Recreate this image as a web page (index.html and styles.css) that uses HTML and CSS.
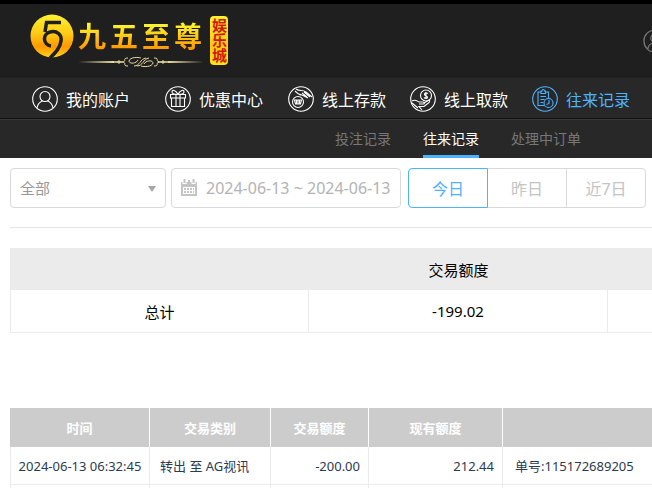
FILE: index.html
```html
<!DOCTYPE html>
<html lang="zh-CN">
<head>
<meta charset="UTF-8">
<meta name="viewport" content="width=device-width, initial-scale=1.0">
<title>往来记录</title>
<link rel="stylesheet" href="styles.css">
</head>
<body>

<header class="header">
  <a class="logo" href="#">
    <svg class="logo-mark" width="44" height="44" viewBox="0 0 44 44">
      <defs>
        <linearGradient id="gold" x1="0" y1="0" x2="0" y2="1">
          <stop offset="0" stop-color="#fff22e"/>
          <stop offset=".45" stop-color="#ffc914"/>
          <stop offset=".75" stop-color="#ff9800"/>
          <stop offset="1" stop-color="#ffd51c"/>
        </linearGradient>
      </defs>
      <circle cx="22" cy="22" r="21.5" fill="url(#gold)"/>
      <path d="M31 8.500H16.500L15 18" fill="none" stroke="#1f1f1f" stroke-width="3.500"/>
      <path d="M21 32C13 31 12 20 20 18C27 16 32 21 31 27C30 34 26 38 20 44" fill="none" stroke="#1f1f1f" stroke-width="3.500"/>
    </svg>
    <span class="logo-text">
      <span class="logo-name"><b>九</b><b>五</b><b>至</b><b>尊</b></span>
      <svg width="126" height="12" viewBox="0 0 126 12" fill="none" stroke="#e9dca0">
        <path d="M0 6L36 5V7ZM126 6L90 5V7Z" fill="#e9dca0" stroke="none"/>
        <path d="M34 6H45M80 6H91" stroke-width="1.5"/>
        <circle cx="41" cy="6" r="1.2"/>
        <circle cx="85" cy="6" r="1.2"/>
        <path d="M50 2C44 2 49 5 45 6C49 7 44 10 50 10M76 2C82 2 77 5 81 6C77 7 82 10 76 10"/>
        <path d="M60 4C58 8 51 8 51 5C52 1 60 1 63 2M66 8C68 4 75 4 75 7C74 11 66 11 63 10M56 10C62 10 62 3 68 2M59 10C65 10 65 3 71 2"/>
      </svg>
    </span>
    <b class="logo-badge">娱乐城</b>
  </a>
  <a class="user-link" href="#" aria-label="会员">
    <svg width="24" height="24" viewBox="0 0 26 26" fill="none" stroke="currentColor" stroke-width="1.4">
      <circle cx="13" cy="13" r="12"/>
      <circle cx="13" cy="10" r="4.5"/>
      <path d="M5 22C6 17 9 15 13 15S20 17 21 22"/>
    </svg>
  </a>
</header>

<nav class="nav">
  <a class="nav-account" href="#">
    <svg class="icon" viewBox="0 0 26 26">
      <circle cx="13" cy="13" r="12.3"/>
      <circle cx="13" cy="10.5" r="5"/>
      <path d="M5 22C5.5 18 8 16 10.5 14.8M21 22C20.5 18 18 16 15.5 14.8"/>
    </svg>
    我的账户
  </a>
  <a class="nav-offers" href="#">
    <svg class="icon" viewBox="0 0 26 26">
      <circle cx="13" cy="13" r="12.3"/>
      <path d="M5.500 8.500H20.500V12H5.500ZM6.500 12V20.500H19.500V12M11 8.500V20.500M15 8.500V20.500"/>
      <path d="M13 8.500C11 4 7 3 7 6C7 8 10 8.500 13 8.500C15 4 19 3 19 6C19 8 16 8.500 13 8.500"/>
    </svg>
    优惠中心
  </a>
  <a href="#">
    <svg class="icon" viewBox="0 0 26 26">
      <circle cx="13" cy="13" r="12.3"/>
      <circle cx="10" cy="16" r="5.5"/>
      <path d="M6.500 14H13.500L12.500 18H7.500ZM8.500 14V18M10 14V18M11.500 14V18"/>
      <path d="M8 3C12 6 14 3 18 6L24 11M7 5C10 8 11 9 14 9L20 12M14 7L19 11M16 6L22 11"/>
    </svg>
    线上存款
  </a>
  <a href="#">
    <svg class="icon" viewBox="0 0 26 26">
      <circle cx="13" cy="13" r="12.3"/>
      <circle cx="16" cy="9.5" r="5.5"/>
      <path d="M18 7.500C16.500 6.500 14 7 14.500 8.500S18 10 17.500 11.500S15 12.500 14 11.500M16 6V13"/>
      <path d="M2 15C5 13 7 15 9 16H13C15 16 15 18 13 18H9M14 17L18 14.500C20 14 20 15.500 19 16.500L14 20.500H9L12 24M2 17L8 22"/>
    </svg>
    线上取款
  </a>
  <a class="active" href="#">
    <svg class="icon" viewBox="0 0 26 26">
      <circle cx="13" cy="13" r="12.3"/>
      <path d="M9 6H6V19.500H12M13 6H16.500V12M9 5H10C10 3 12.500 3 12.500 5H13.500V7.500H9ZM8.500 10.500H14M8.500 13.500H12.500M8.500 16.500H11"/>
      <circle cx="16.5" cy="17" r="4.5"/>
      <path d="M17 14V17.500L14.500 18.500"/>
    </svg>
    往来记录
  </a>
</nav>

<nav class="subnav">
  <a href="#">投注记录</a>
  <a class="active" href="#">往来记录</a>
  <a href="#">处理中订单</a>
</nav>

<main class="content">
  <form class="filters">
    <div class="select-box">
      <select aria-label="交易类别">
        <option>全部</option>
      </select>
    </div>
    <label class="date-box">
      <svg width="18" height="18" viewBox="0 0 18 18" aria-hidden="true">
        <path d="M1 3H17V17H1Z" fill="#c4c4c4"/>
        <path d="M3 8H15V15H3Z" fill="#fff"/>
        <path d="M4.500 0V5M13.500 0V5" stroke="#fff" stroke-width="4"/>
        <path d="M4.500 0V4M9 1V4M13.500 0V4" stroke="#c4c4c4" stroke-width="2"/>
        <path d="M4 10H14M4 13H14" stroke="#c4c4c4" stroke-width="2" stroke-dasharray="2 1"/>
      </svg>
      <input type="text" value="2024-06-13 ~ 2024-06-13" aria-label="日期">
    </label>
    <div class="days">
      <button type="button" class="active">今日</button>
      <button type="button">昨日</button>
      <button type="button">近7日</button>
    </div>
  </form>

  <table class="summary">
    <thead>
      <tr><th></th><th>交易额度</th><th></th></tr>
    </thead>
    <tbody>
      <tr><td>总计</td><td>-199.02</td><td></td></tr>
    </tbody>
  </table>

  <table class="records">
    <colgroup>
      <col class="col-time">
      <col class="col-type">
      <col class="col-amount">
      <col class="col-balance">
      <col>
    </colgroup>
    <thead>
      <tr><th>时间</th><th>交易类别</th><th>交易额度</th><th>现有额度</th><th></th></tr>
    </thead>
    <tbody>
      <tr>
        <td class="time">2024-06-13 06:32:45</td>
        <td>转出 至 AG视讯</td>
        <td class="number">-200.00</td>
        <td class="number">212.44</td>
        <td class="note">单号:115172689205</td>
      </tr>
      <tr><td></td><td></td><td></td><td></td><td></td></tr>
    </tbody>
  </table>
</main>

</body>
</html>
```

FILE: styles.css
```css
* {
  box-sizing: border-box;
}
html {
  scrollbar-width: none;
}
body {
  margin: 0;
  background: #fff;
  color: #000;
  font-family: "Noto Sans", "Noto Sans CJK SC", sans-serif;
}
a {
  color: inherit;
  text-decoration: none;
}
input, select, button {
  font-family: inherit;
}

/* header */
.header {
  display: flex;
  justify-content: space-between;
  align-items: center;
  min-width: 667px;
  height: 78px;
  padding-left: 30px;
  border-top: 4px solid #000;
  background: #1f1f1f;
}
.logo {
  display: flex;
  align-items: flex-start;
}
.logo-text {
  display: flex;
  flex-direction: column;
  gap: 4px;
  margin: 6px 6px 0 4px;
}
.logo-name {
  display: flex;
  gap: 4px;
  font-size: 28px;
  line-height: 32px;
  color: transparent;
  background: linear-gradient(#fff22e 15%, #ffc914 50%, #ff9800 90%);
  -webkit-background-clip: text;
  background-clip: text;
}
.logo-badge {
  margin-top: 2px;
  padding: 2px 0;
  border-radius: 4px;
  background: linear-gradient(to bottom, #fff22e, #ffc914 60%, #ffe21c);
  color: #d01808;
  font-size: 15px;
  line-height: 18px;
  writing-mode: vertical-rl;
}
.user-link {
  display: flex;
  color: #777;
}

/* navigation */
.nav {
  display: flex;
  align-items: center;
  gap: 24px;
  height: 42px;
  padding-left: 32px;
  border-bottom: 1px solid #383838;
  background: linear-gradient(#282828 40px, #111 40px);
  color: #fff;
  font-size: 16px;
  white-space: nowrap;
}
.nav a {
  display: flex;
  align-items: center;
  gap: 8px;
}
.nav .nav-account {
  padding-right: 11px;
}
.nav .nav-offers {
  padding-right: 1px;
}
.nav .active {
  color: #4eb3ff;
}
.icon {
  width: 26px;
  height: 26px;
  fill: none;
  stroke: currentColor;
  stroke-width: 1.1;
}
.subnav {
  display: flex;
  gap: 32px;
  height: 38px;
  padding-left: 335px;
  background: #282828;
  color: #777;
  font-size: 14px;
  line-height: 38px;
  white-space: nowrap;
}
.subnav .active {
  border-bottom: 3px solid #4eb3ff;
  color: #fff;
}

/* filters */
.content {
  padding: 10px 0 0 10px;
}
.filters {
  display: flex;
  padding-bottom: 19px;
  border-bottom: 1px solid #e6e6e6;
}
.select-box {
  position: relative;
  width: 156px;
  margin-right: 5px;
}
.select-box select {
  width: 100%;
  height: 40px;
  padding: 0 9px;
  appearance: none;
  border: 1px solid #d9d9d9;
  border-radius: 4px;
  background: #fff;
  color: #999;
  font-size: 15px;
}
.select-box::after {
  content: "";
  position: absolute;
  top: 18px;
  right: 10px;
  border: 4px solid transparent;
  border-top: 6px solid #a6a6a6;
  border-bottom: 0;
  pointer-events: none;
}
.date-box {
  display: flex;
  align-items: center;
  gap: 8px;
  width: 230px;
  height: 40px;
  margin-right: 7px;
  padding-left: 8px;
  border: 1px solid #d9d9d9;
  border-radius: 4px;
}
.date-box svg {
  flex: none;
}
.date-box input {
  min-width: 0;
  flex: 1;
  padding: 0;
  border: 0;
  outline: 0;
  color: #b3b3b3;
  font-size: 16px;
}
.days {
  display: flex;
}
.days button {
  width: 80px;
  height: 40px;
  margin-right: -1px;
  padding: 0;
  border: 1px solid #d9d9d9;
  background: #fff;
  color: #c4c4c4;
  font-size: 16px;
}
.days button:first-child {
  border-radius: 4px 0 0 4px;
}
.days button:last-child {
  border-radius: 0 4px 4px 0;
}
.days .active {
  position: relative;
  border-color: #4eb3ff;
  color: #4eb3ff;
}

/* tables */
table {
  width: 100%;
  min-width: 897px;
  border-spacing: 0;
  table-layout: fixed;
}
th, td {
  padding: 0;
}
td {
  border-right: 1px solid #ebebeb;
  border-bottom: 1px solid #ebebeb;
}
td:first-child {
  border-left: 1px solid #ebebeb;
}
.summary {
  margin: 20px 0 75px;
  font-size: 15px;
  text-align: center;
}
.summary th {
  height: 42px;
  background: #ebebeb;
  font-weight: normal;
}
.summary td {
  height: 43px;
}
.records {
  color: #2c3b4e;
  font-size: 13px;
}
.records th {
  height: 39px;
  border-right: 1px solid #fff;
  background: #ccc;
  color: #fff;
}
.records td {
  height: 38px;
  padding: 0 8px 0 10px;
}
.records .time {
  padding: 0;
  text-align: center;
}
.records .number {
  text-align: right;
}
.records .note {
  padding-left: 12px;
}
.col-time {
  width: 140px;
}
.col-type {
  width: 121px;
}
.col-amount {
  width: 98px;
}
.col-balance {
  width: 134px;
}
```
